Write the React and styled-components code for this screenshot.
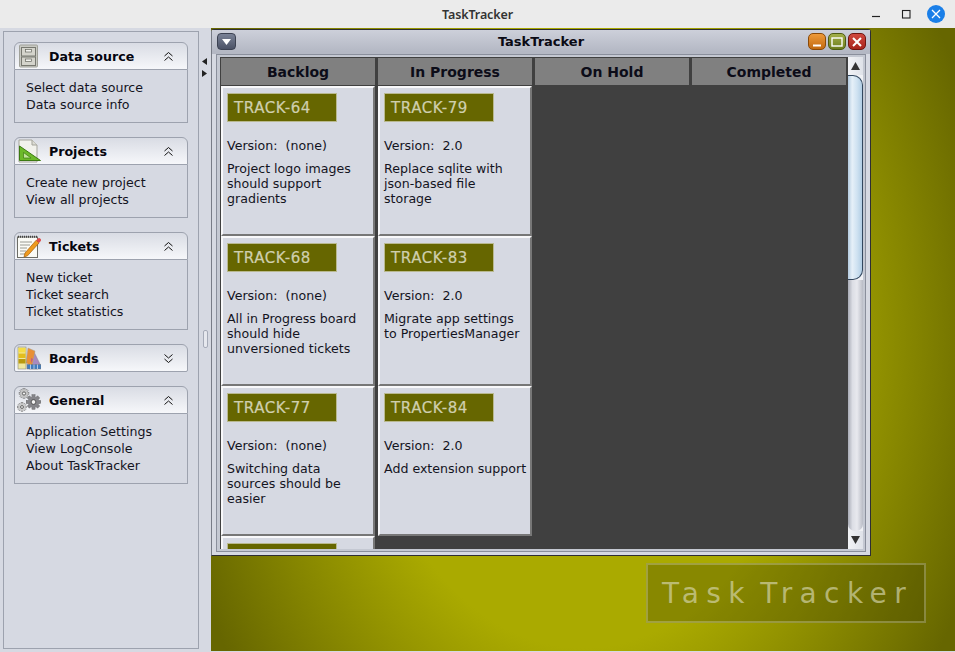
import React from "react";
import styled, { createGlobalStyle } from "styled-components";

const SWING = `"DejaVu Sans", Verdana, sans-serif`;

const PANELS = [
  { title: "Data source", icon: "cabinet", open: true, links: ["Select data source", "Data source info"] },
  { title: "Projects", icon: "ruler", open: true, links: ["Create new project", "View all projects"] },
  { title: "Tickets", icon: "notepad", open: true, links: ["New ticket", "Ticket search", "Ticket statistics"] },
  { title: "Boards", icon: "swatches", open: false, links: [] },
  { title: "General", icon: "gears", open: true, links: ["Application Settings", "View LogConsole", "About TaskTracker"] },
];

const COLUMNS = [
  {
    title: "Backlog",
    cards: [
      { id: "TRACK-64", version: "(none)", text: "Project logo images should support gradients" },
      { id: "TRACK-68", version: "(none)", text: "All in Progress board should hide unversioned tickets" },
      { id: "TRACK-77", version: "(none)", text: "Switching data sources should be easier" },
      { id: "", version: "", text: "" },
    ],
  },
  {
    title: "In Progress",
    cards: [
      { id: "TRACK-79", version: "2.0", text: "Replace sqlite with json-based file\nstorage" },
      { id: "TRACK-83", version: "2.0", text: "Migrate app settings to PropertiesManager" },
      { id: "TRACK-84", version: "2.0", text: "Add extension support" },
    ],
  },
  { title: "On Hold", cards: [] },
  { title: "Completed", cards: [] },
];

const GlobalStyle = createGlobalStyle`
  html, body {
    margin: 0;
    padding: 0;
    background: #ebebeb;
    overflow: hidden;
  }
  * {
    box-sizing: border-box;
  }
`;

const Screen = styled.div`
  width: 955px;
  height: 652px;
  display: flex;
  flex-direction: column;
  font-family: ${SWING};
  font-size: 12.6px;
  color: #14141e;
`;

const AppBar = styled.header`
  position: relative;
  height: 28px;
  flex: none;
  display: flex;
  align-items: center;
  justify-content: center;
  background: #ebebeb;
  border-radius: 9px 9px 0 0;
  font-family: "Noto Sans", sans-serif;
  font-weight: 600;
  font-size: 12.5px;
  letter-spacing: -0.1px;
  color: #333;
`;

const AppControls = styled.div`
  position: absolute;
  right: 4px;
  top: 0;
  height: 28px;
  display: flex;
  align-items: center;
`;

const AppControl = styled.div`
  width: 30px;
  height: 28px;
  display: flex;
  align-items: center;
  justify-content: center;
`;

const CloseDot = styled.div`
  width: 18px;
  height: 18px;
  border-radius: 50%;
  background: #1a7fe8;
  display: flex;
  align-items: center;
  justify-content: center;
`;

const Main = styled.div`
  flex: 1;
  display: flex;
  min-height: 0;
  background: #d6d9e2;
`;

const SideColumn = styled.aside`
  width: 199px;
  flex: none;
  padding: 3px 0 3px 3px;
`;

const SideFrame = styled.div`
  height: 100%;
  border: 1px solid #9da2ae;
  padding: 10px 10px 0 10px;
  display: flex;
  flex-direction: column;
  gap: 14px;
`;

const Splitter = styled.div`
  width: 12px;
  flex: none;
  position: relative;
  display: flex;
  align-items: center;
  justify-content: center;
`;

const SplitArrows = styled.div`
  position: absolute;
  top: 30px;
  left: 3px;
  display: flex;
  flex-direction: column;
  gap: 5px;
`;

const SplitGrip = styled.div`
  width: 5px;
  height: 18px;
  margin-top: -3px;
  border: 1px solid #a6abb8;
  border-radius: 2px;
  background: #e6e8ee;
`;

const TaskPanel = styled.section`
  width: 174px;
`;

const PanelHead = styled.div`
  height: 28px;
  display: flex;
  align-items: center;
  border: 1px solid #9da2ae;
  border-radius: 6px 6px ${(p) => (p.$open ? "0 0" : "2px 2px")};
  background: linear-gradient(#d9dce4, #f6f7fa);
`;

const IconSlot = styled.div`
  width: 34px;
  height: 24px;
  flex: none;
  display: flex;
  align-items: center;
  justify-content: center;
  padding-right: 6px;
`;

const PanelTitle = styled.div`
  flex: 1;
  font-weight: 700;
  font-size: 12.6px;
  color: #05050f;
`;

const Chevron = styled.div`
  width: 38px;
  flex: none;
  display: flex;
  justify-content: center;
`;

const PanelBody = styled.div`
  border: 1px solid #9da2ae;
  border-top: 0;
  padding: 9px 11px 9px;
  line-height: 17px;
`;

const Desktop = styled.main`
  flex: 1;
  position: relative;
  overflow: hidden;
  margin-bottom: 1px;
  background: radial-gradient(ellipse 400px 560px at 372px 312px, #aaaa00 0%, #aaaa00 55%, #666600 105%);
`;

const Window = styled.div`
  position: absolute;
  left: 0;
  top: 1px;
  width: 660px;
  height: 527px;
  display: flex;
  flex-direction: column;
  padding: 0 4px 3px;
  border: 1px solid #2e2e33;
  border-left-color: #777b86;
  border-radius: 3px 3px 0 0;
  background: #d6d9e2;
`;

const WindowTitle = styled.div`
  height: 24px;
  flex: none;
  margin: 0 -4px;
  padding: 3px 4px 0 5px;
  display: flex;
  justify-content: space-between;
  position: relative;
  background: linear-gradient(#cdd0da, #b4b8c4 90%);
`;

const WindowName = styled.div`
  position: absolute;
  left: 0;
  right: 0;
  top: 4px;
  text-align: center;
  font-weight: 700;
  font-size: 13px;
  color: #0a0a14;
  line-height: 16px;
`;

const MenuButton = styled.div`
  width: 19px;
  height: 17px;
  border-radius: 4px;
  border: 1px solid #3c4252;
  background: linear-gradient(#7a8296, #4b5266);
  display: flex;
  align-items: center;
  justify-content: center;
`;

const WindowButtons = styled.div`
  position: relative;
  display: flex;
  gap: 2px;
`;

const FrameButton = styled.div`
  width: 18px;
  height: 17px;
  border-radius: 5px;
  border: 1px solid ${(p) => p.$edge};
  background: linear-gradient(${(p) => p.$light}, ${(p) => p.$dark});
  display: flex;
  align-items: center;
  justify-content: center;
`;

const Pane = styled.div`
  flex: 1;
  min-height: 0;
  display: flex;
  border: 1px solid #8a8f9c;
  padding: 2px 2px 2px 3px;
  background: #c4c8d2;
`;

const Board = styled.div`
  width: 628px;
  flex: none;
  overflow: hidden;
  padding: 1px 0 0 1px;
  background: #404040;
  display: flex;
  gap: 3px;
`;

const BoardColumn = styled.div`
  width: 154px;
  flex: none;
  display: flex;
  flex-direction: column;
`;

const ColumnHead = styled.div`
  height: 27px;
  flex: none;
  margin-bottom: 1px;
  background: #808080;
  display: flex;
  align-items: center;
  justify-content: center;
  font-weight: 700;
  font-size: 14px;
  color: #0c0c18;
`;

const Card = styled.article`
  height: 150px;
  flex: none;
  padding: 5px 2px 0 4px;
  background: #d6d9e2;
  border: 2px solid;
  border-color: #f8f8fa #777 #777 #f8f8fa;
`;

const CardTag = styled.div`
  width: 110px;
  height: 29px;
  padding-left: 6px;
  line-height: 28px;
  background: #666600;
  border: 1px solid #b9b98f;
  font-size: 15px;
  letter-spacing: 0.6px;
  -webkit-text-stroke: 0.2px #cfcfae;
  color: #cfcfae;
`;

const CardVersion = styled.div`
  margin-top: 15px;
  line-height: 17px;
  white-space: pre;
`;

const CardText = styled.div`
  margin-top: 7px;
  line-height: 15px;
  white-space: pre-line;
`;

const ScrollBar = styled.div`
  width: 15px;
  flex: none;
  display: flex;
  flex-direction: column;
  background: #f0f1f5;
`;

const ScrollArrow = styled.div`
  height: 18px;
  flex: none;
  display: flex;
  align-items: center;
  justify-content: center;
  background: linear-gradient(90deg, #f2f3f6, #dfe2e9);
`;

const ScrollThumb = styled.div`
  height: 205px;
  flex: none;
  border: 1px solid #33475e;
  border-left: 0;
  border-radius: 0 10px 10px 0;
  background: linear-gradient(90deg, #b4cbe0, #e6f0f8 30%, #cfe2f1 65%, #b1cde4);
`;

const ScrollTrack = styled.div`
  flex: 1;
  border-radius: 0 0 7px 7px;
  background: linear-gradient(90deg, #a9acb6, #dcdee5 30%, #e8e9ee 60%, #b9bcc6);
`;

const Logo = styled.div`
  position: absolute;
  left: 435px;
  top: 535px;
  width: 280px;
  height: 60px;
  display: flex;
  align-items: center;
  justify-content: center;
  border: 2px solid rgba(200, 200, 160, 0.4);
  background: rgba(60, 60, 0, 0.3);
  font-size: 28px;
  letter-spacing: 7.4px;
  word-spacing: -8px;
  padding: 1px 0 0 3px;
  white-space: nowrap;
  color: rgba(215, 215, 175, 0.66);
`;

const DoubleChevron = ({ up }) => (
  <svg width="11" height="11" viewBox="0 0 11 11" fill="none" stroke="#111" strokeWidth="1">
    <g transform={up ? undefined : "rotate(180 5.5 5.5)"}>
      <path d="M1.5 5 5.5 1.5 9.5 5" />
      <path d="M1.5 9.5 5.5 6 9.5 9.5" />
    </g>
  </svg>
);

const Gear = ({ x, y, r, fill }) => {
  const teeth = [0, 45, 90, 135].map((a) => (
    <rect key={a} x={x - r * 0.28} y={y - r * 1.3} width={r * 0.56} height={r * 2.6} fill={fill} stroke="#555" strokeWidth="0.4" transform={`rotate(${a} ${x} ${y})`} />
  ));
  return (
    <g>
      {teeth}
      <circle cx={x} cy={y} r={r} fill={fill} />
      <circle cx={x} cy={y} r={r * 0.42} fill="#f4f4f4" stroke="#333" strokeWidth="0.7" />
    </g>
  );
};

const ICONS = {
  cabinet: (
    <>
      <rect x="2.5" y="1" width="18" height="22" rx="1" fill="#c8c9c2" stroke="#a0a199" />
      <rect x="4.5" y="3.5" width="14" height="8.5" fill="#d4d4cc" stroke="#777870" />
      <rect x="4.5" y="13" width="14" height="8.5" fill="#d4d4cc" stroke="#777870" />
      <rect x="8.5" y="5.5" width="6" height="2.5" fill="#f2f2ee" stroke="#66675f" strokeWidth="0.7" />
      <rect x="8.5" y="15" width="6" height="2.5" fill="#f2f2ee" stroke="#66675f" strokeWidth="0.7" />
    </>
  ),
  ruler: (
    <>
      <path d="M2 1h13l5 5v17H2z" fill="#f2f2ec" stroke="#a5a59c" />
      <path d="M15 1v5h5" fill="#dcdcd4" stroke="#a5a59c" />
      <path d="M2.5 7 23.5 21.5H2.5z" fill="#6cb92a" stroke="#3c7a12" />
      <path d="M6.5 13.5 14 19H6.5z" fill="#c2e59a" stroke="#3c7a12" strokeWidth="0.7" />
    </>
  ),
  notepad: (
    <>
      <rect x="0.5" y="3" width="20" height="20.5" fill="#fbfbf6" stroke="#6d6d66" />
      <path d="M1 2.8h19" stroke="#444" strokeWidth="2" strokeDasharray="1 1" />
      <path d="M3 8h12M3 11h10M3 14h7M3 17h6M3 20h5" stroke="#9a9a92" strokeWidth="1" />
      <path d="M8 19 7 23l3.5-1.2L22 9l-2.8-2.8z" fill="#ee9a1e" stroke="#a65f0a" strokeWidth="0.7" />
      <path d="M19.2 6.2 22 9l1.6-1.7a2 2 0 0 0-2.8-2.8z" fill="#dd4d4d" />
    </>
  ),
  swatches: (
    <>
      <path d="M12 18 17 6l7 14-3 3H12z" fill="#a78ac0" stroke="#86828c" strokeWidth="0.5" />
      <path d="M9 17 11 2l7 3-3 15z" fill="#e88f35" stroke="#a6a094" strokeWidth="0.5" />
      <rect x="1" y="1" width="8" height="22" fill="#f0e8a0" stroke="#8b8b80" strokeWidth="0.6" />
      <rect x="1.5" y="2" width="7" height="4.5" fill="#f5dc46" />
      <rect x="1.5" y="7.5" width="7" height="4.5" fill="#e3bd1d" />
      <rect x="1.5" y="13" width="7" height="4.5" fill="#b99a10" />
      <path d="M14 12l2 1-2 4z" fill="#c05a8a" />
      <rect x="10" y="18.5" width="14" height="4.5" fill="#3f7cc0" stroke="#777" strokeWidth="0.5" />
      <path d="M13.5 18.5v4.5M17 18.5v4.5M20.5 18.5v4.5" stroke="#dfe8f5" strokeWidth="0.7" />
    </>
  ),
  gears: (
    <>
      <Gear x={7} y={5.5} r={3.8} fill="#c4c4c4" />
      <Gear x={5} y={19} r={3.4} fill="#cacaca" />
      <Gear x={16.5} y={14} r={5.6} fill="#85858a" />
    </>
  ),
};

const PanelIcon = ({ name }) => (
  <svg width="24" height="24" viewBox="0 0 24 24" style={{ flex: "none" }}>
    {ICONS[name]}
  </svg>
);

const SidePanel = ({ panel }) => (
  <TaskPanel>
    <PanelHead $open={panel.open}>
      <IconSlot>
        <PanelIcon name={panel.icon} />
      </IconSlot>
      <PanelTitle>{panel.title}</PanelTitle>
      <Chevron>
        <DoubleChevron up={panel.open} />
      </Chevron>
    </PanelHead>
    {panel.open && (
      <PanelBody>
        {panel.links.map((link) => (
          <div key={link}>{link}</div>
        ))}
      </PanelBody>
    )}
  </TaskPanel>
);

const TicketCard = ({ card }) => (
  <Card>
    <CardTag>{card.id}</CardTag>
    {card.version && <CardVersion>{`Version:  ${card.version}`}</CardVersion>}
    {card.text && <CardText>{card.text}</CardText>}
  </Card>
);

const App = () => {
  return (
    <Screen>
      <GlobalStyle />
      <AppBar>
        TaskTracker
        <AppControls>
          <AppControl>
            <svg width="12" height="12" viewBox="0 0 12 12">
              <path d="M2 8.5h8" stroke="#222" strokeWidth="1.2" />
            </svg>
          </AppControl>
          <AppControl>
            <svg width="12" height="12" viewBox="0 0 12 12" fill="none">
              <rect x="2.5" y="2.5" width="7.5" height="7.5" stroke="#222" strokeWidth="1.1" />
            </svg>
          </AppControl>
          <AppControl>
            <CloseDot>
              <svg width="10" height="10" viewBox="0 0 10 10">
                <path d="M1 1l8 8M9 1 1 9" stroke="#fff" strokeWidth="1.3" />
              </svg>
            </CloseDot>
          </AppControl>
        </AppControls>
      </AppBar>
      <Main>
        <SideColumn>
          <SideFrame>
            {PANELS.map((panel) => (
              <SidePanel key={panel.title} panel={panel} />
            ))}
          </SideFrame>
        </SideColumn>
        <Splitter>
          <SplitArrows>
            <svg width="5" height="7" viewBox="0 0 5 7">
              <path d="M5 0v7L0 3.5z" fill="#222" />
            </svg>
            <svg width="5" height="7" viewBox="0 0 5 7">
              <path d="M0 0v7l5-3.5z" fill="#222" />
            </svg>
          </SplitArrows>
          <SplitGrip />
        </Splitter>
        <Desktop>
          <Window>
            <WindowTitle>
              <WindowName>TaskTracker</WindowName>
              <MenuButton>
                <svg width="9" height="6" viewBox="0 0 9 6">
                  <path d="M0 0h9L4.5 6z" fill="#fff" />
                </svg>
              </MenuButton>
              <WindowButtons>
                <FrameButton $edge="#8a4a08" $light="#ee9a3a" $dark="#c26a10">
                  <svg width="10" height="10" viewBox="0 0 10 10">
                    <path d="M1 8.5h8" stroke="#fff" strokeWidth="2" />
                  </svg>
                </FrameButton>
                <FrameButton $edge="#4e5c14" $light="#a3b04a" $dark="#6e7d1e">
                  <svg width="12" height="10" viewBox="0 0 12 10" fill="none">
                    <rect x="1" y="1" width="10" height="8" stroke="#fff" strokeWidth="1.4" />
                  </svg>
                </FrameButton>
                <FrameButton $edge="#6e1510" $light="#d0483e" $dark="#a8251c">
                  <svg width="10" height="10" viewBox="0 0 10 10">
                    <path d="M1 1l8 8M9 1 1 9" stroke="#fff" strokeWidth="2" />
                  </svg>
                </FrameButton>
              </WindowButtons>
            </WindowTitle>
            <Pane>
              <Board>
                {COLUMNS.map((col) => (
                  <BoardColumn key={col.title}>
                    <ColumnHead>{col.title}</ColumnHead>
                    {col.cards.map((card, i) => (
                      <TicketCard key={i} card={card} />
                    ))}
                  </BoardColumn>
                ))}
              </Board>
              <ScrollBar>
                <ScrollArrow>
                  <svg width="9" height="8" viewBox="0 0 9 8">
                    <path d="M4.5 0 9 8H0z" fill="#333" />
                  </svg>
                </ScrollArrow>
                <ScrollThumb />
                <ScrollTrack />
                <ScrollArrow>
                  <svg width="9" height="8" viewBox="0 0 9 8">
                    <path d="M0 0h9L4.5 8z" fill="#333" />
                  </svg>
                </ScrollArrow>
              </ScrollBar>
            </Pane>
          </Window>
          <Logo>Task Tracker</Logo>
        </Desktop>
      </Main>
    </Screen>
  );
};

export default App;
